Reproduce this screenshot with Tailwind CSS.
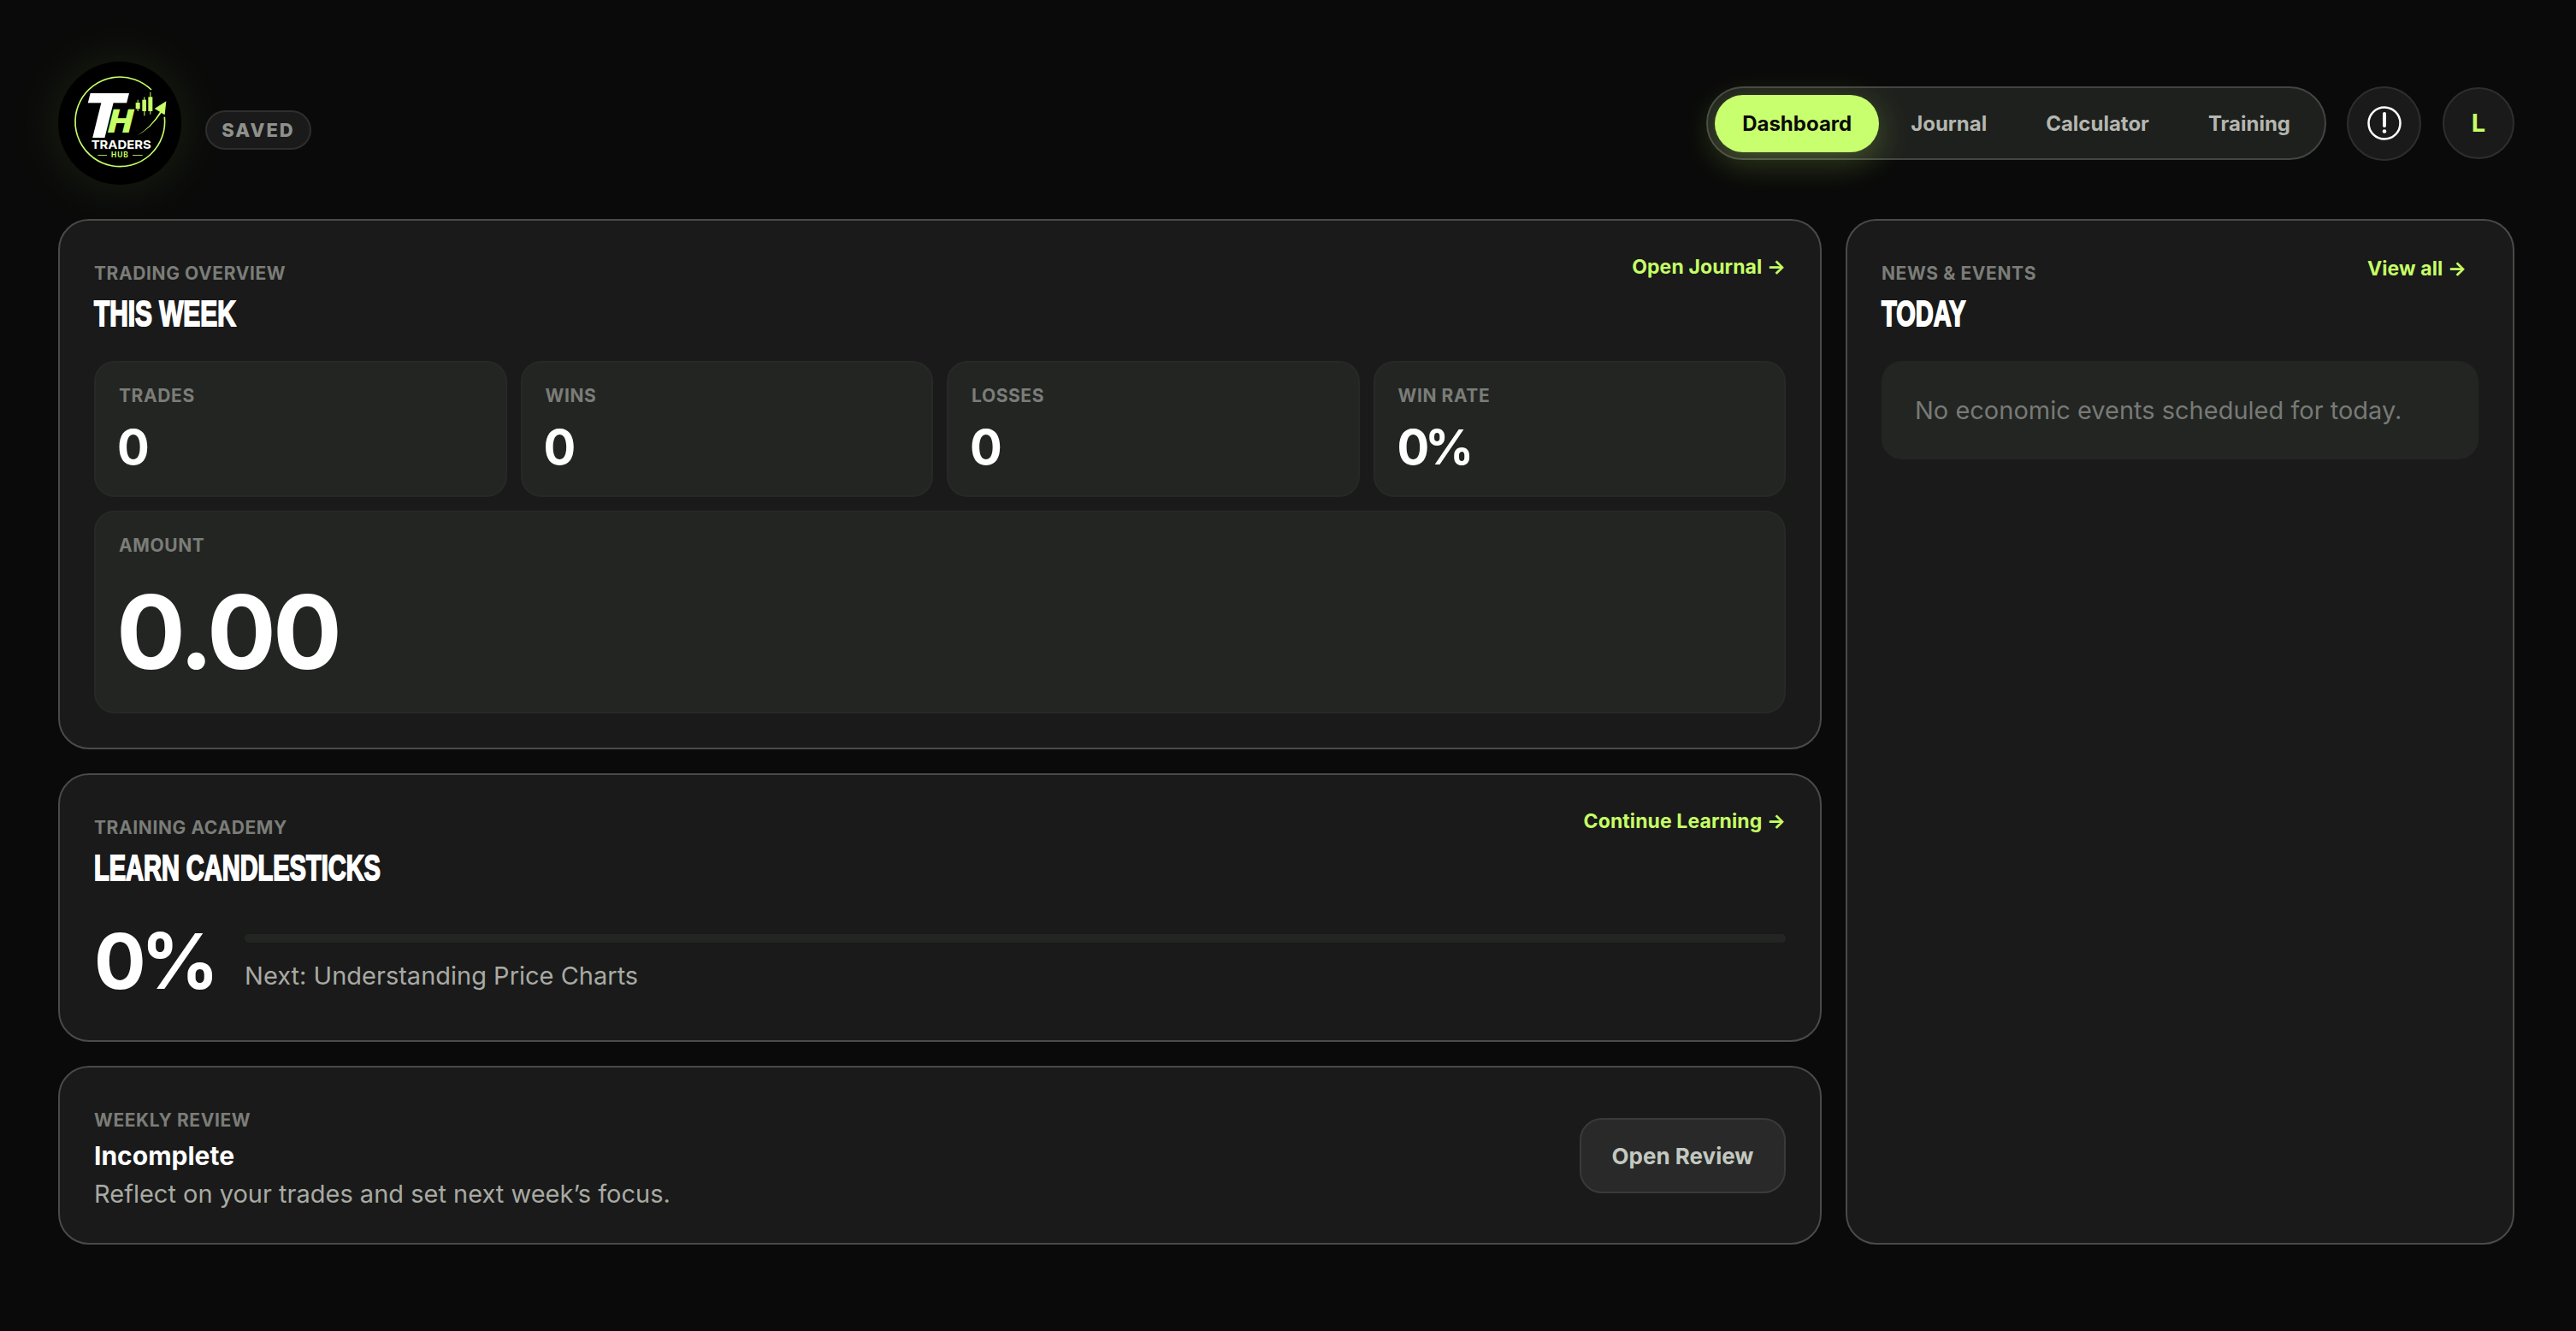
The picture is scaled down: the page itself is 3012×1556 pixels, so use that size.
<!DOCTYPE html>
<html lang="en">
<head>
  <meta charset="UTF-8" />
  <title>Traders Hub</title>
  <script src="https://cdn.jsdelivr.net/npm/@tailwindcss/browser@4"></script>
</head>
<body class="bg-[#0a0a0a] min-h-screen font-['Inter',sans-serif] text-white overflow-hidden">
  <div class="pl-[68px] pr-[72px] pt-[72px]">

    <!-- Header -->
    <header class="flex items-center justify-between h-[144px] mb-[40px]">
      <div class="flex items-center gap-[28px]">
        <div class="w-[144px] h-[144px] rounded-full bg-black shadow-[0_0_70px_rgba(198,255,100,0.1)]">
          <svg viewBox="0 0 432 432" class="w-[144px] h-[144px]">
            <g transform="translate(-24,-21)">
              <path d="M351 120 A157 157 0 1 0 397 215" fill="none" stroke="#c6ff66" stroke-width="5" />
              <text x="92" y="288" transform="translate(72,0) skewX(-14)" font-family="Inter" font-weight="900" font-size="215" fill="#fff">T</text>
              <text x="193" y="270" transform="translate(67,0) skewX(-14)" font-family="Inter" font-weight="900" font-size="112" fill="#c6ff66">H</text>
              <rect x="296" y="165" width="15" height="22" fill="#c6ff66" />
              <rect x="302" y="155" width="3" height="40" fill="#c6ff66" />
              <rect x="319" y="155" width="14" height="40" fill="#c6ff66" />
              <rect x="325" y="145" width="3" height="66" fill="#c6ff66" />
              <rect x="340" y="145" width="15" height="50" fill="#c6ff66" />
              <rect x="346" y="128" width="3" height="78" fill="#c6ff66" />
              <path d="M300 281 Q350 250 381 197 L362 186 L403 160 L398 208 L386 201 Q350 255 300 281 Z" fill="#c6ff66" />
              <text x="245" y="328" text-anchor="middle" textLength="210" lengthAdjust="spacingAndGlyphs" font-family="Inter" font-weight="700" font-size="41" fill="#fff">TRADERS</text>
              <text x="241" y="358" text-anchor="middle" letter-spacing="3" font-family="Inter" font-weight="700" font-size="25" fill="#c6ff66">HUB</text>
              <rect x="163" y="348" width="32" height="2.5" fill="#c6ff66" />
              <rect x="285" y="348" width="35" height="2.5" fill="#c6ff66" />
            </g>
          </svg>
        </div>
        <span class="mt-[16px] w-[124px] h-[46px] flex items-center justify-center rounded-full bg-[#1a1a1a] border-2 border-[#2e2f2d] text-[22px] font-extrabold tracking-[2px] text-[#8f918c]">SAVED</span>
      </div>

      <div class="flex items-center">
        <nav class="flex items-center gap-[5px] h-[86px] px-[8px] rounded-full bg-[#1e201d] border-2 border-[#444543] text-[24px] font-bold text-[#b4b6b0]">
          <a class="h-[67px] flex items-center px-[32px] pt-[1px] rounded-full bg-[#c8ff6e] text-[#0a0a0a] shadow-[0_10px_40px_rgba(198,255,100,0.25)]">Dashboard</a>
          <a class="h-[67px] flex items-center px-[32px] pt-[1px]">Journal</a>
          <a class="h-[67px] flex items-center px-[32px] pt-[1px]">Calculator</a>
          <a class="h-[67px] flex items-center px-[32px] pt-[1px]">Training</a>
        </nav>
        <button class="ml-[24px] w-[87px] h-[87px] flex items-center justify-center rounded-full bg-[#1a1a1a] border-2 border-[#2e2f2d]">
          <svg viewBox="0 0 40 40" class="w-[40px] h-[40px]" fill="none">
            <circle cx="20" cy="20" r="18.5" stroke="#fff" stroke-width="2.5" />
            <path d="M20 9v14" stroke="#fff" stroke-width="4" stroke-linecap="round" />
            <circle cx="20" cy="29.5" r="2.3" fill="#fff" />
          </svg>
        </button>
        <button class="ml-[25px] w-[84px] h-[84px] flex items-center justify-center rounded-full bg-[#1a1a1a] border-2 border-[#2e2f2d] text-[29px] font-bold text-[#c6ff66]">L</button>
      </div>
    </header>

    <!-- Main -->
    <main class="grid grid-cols-[2062px_782px] gap-[28px]">
      <div class="flex flex-col gap-[28px]">

        <section class="rounded-[36px] bg-[#1a1a1a] border-2 border-[#4a4a48] px-[40px] pt-[48px] pb-[40px]">
          <div class="flex items-start justify-between">
            <div>
              <p class="text-[21px] leading-[28px] font-bold tracking-[0.6px] text-[#7b7d78]">TRADING OVERVIEW</p>
              <h2 class="mt-[9px] w-max origin-left scale-x-[0.71] text-[42px] leading-[48px] font-['Liberation_Sans',sans-serif] font-bold [-webkit-text-stroke:2px_white]">THIS WEEK</h2>
            </div>
            <a class="-mt-[8px] text-[23px] leading-[28px] font-bold tracking-[0.1px] text-[#c6ff66]">Open Journal →</a>
          </div>
          <div class="mt-[31px] grid grid-cols-4 gap-[16px]">
            <div class="rounded-[24px] bg-[#232523] border-2 border-[#272927] px-[27px] pt-[25px] pb-[26px]">
              <p class="text-[21px] leading-[28px] font-bold tracking-[0.6px] text-[#7b7d78]">TRADES</p>
              <p class="mt-[16px] -ml-[2px] text-[56px] leading-[60px] font-bold tracking-[-3px]">0</p>
            </div>
            <div class="rounded-[24px] bg-[#232523] border-2 border-[#272927] px-[27px] pt-[25px] pb-[26px]">
              <p class="text-[21px] leading-[28px] font-bold tracking-[0.6px] text-[#7b7d78]">WINS</p>
              <p class="mt-[16px] -ml-[2px] text-[56px] leading-[60px] font-bold tracking-[-3px]">0</p>
            </div>
            <div class="rounded-[24px] bg-[#232523] border-2 border-[#272927] px-[27px] pt-[25px] pb-[26px]">
              <p class="text-[21px] leading-[28px] font-bold tracking-[0.6px] text-[#7b7d78]">LOSSES</p>
              <p class="mt-[16px] -ml-[2px] text-[56px] leading-[60px] font-bold tracking-[-3px]">0</p>
            </div>
            <div class="rounded-[24px] bg-[#232523] border-2 border-[#272927] px-[27px] pt-[25px] pb-[26px]">
              <p class="text-[21px] leading-[28px] font-bold tracking-[0.6px] text-[#7b7d78]">WIN RATE</p>
              <p class="mt-[16px] -ml-[1px] text-[56px] leading-[60px] font-bold tracking-[-5px]">0%</p>
            </div>
          </div>
          <div class="mt-[16px] rounded-[24px] bg-[#232523] border-2 border-[#272927] px-[27px] pt-[25px] pb-[33px]">
            <p class="text-[21px] leading-[28px] font-bold tracking-[0.6px] text-[#7b7d78]">AMOUNT</p>
            <p class="mt-[27px] -ml-[3px] text-[120px] leading-[120px] font-bold tracking-[-4px]">0.00</p>
          </div>
        </section>

        <section class="rounded-[36px] bg-[#1a1a1a] border-2 border-[#4a4a48] px-[40px] pt-[48px] pb-[45px]">
          <div class="flex items-start justify-between">
            <div>
              <p class="text-[21px] leading-[28px] font-bold tracking-[0.6px] text-[#7b7d78]">TRAINING ACADEMY</p>
              <h2 class="mt-[9px] w-max origin-left scale-x-[0.69] text-[42px] leading-[48px] font-['Liberation_Sans',sans-serif] font-bold [-webkit-text-stroke:2px_white]">LEARN CANDLESTICKS</h2>
            </div>
            <a class="-mt-[8px] text-[23px] leading-[28px] font-bold tracking-[0.1px] text-[#c6ff66]">Continue Learning →</a>
          </div>
          <div class="mt-[42px] flex items-center gap-[36px]">
            <p class="mb-[4px] text-[90px] leading-[86px] font-bold tracking-[-6px]">0%</p>
            <div class="flex-1">
              <div class="h-[10px] rounded-full bg-[#232523]"></div>
              <p class="mt-[19px] text-[29px] leading-[40px] text-[#a8aaa3]">Next: Understanding Price Charts</p>
            </div>
          </div>
        </section>

        <section class="flex items-center justify-between rounded-[36px] bg-[#1a1a1a] border-2 border-[#4a4a48] px-[40px] pt-[48px] pb-[37px]">
          <div>
            <p class="text-[21px] leading-[28px] font-bold tracking-[0.6px] text-[#7b7d78]">WEEKLY REVIEW</p>
            <p class="mt-[8px] text-[30px] leading-[38px] font-bold">Incomplete</p>
            <p class="mt-[6px] text-[29px] leading-[40px] text-[#a8aaa3]">Reflect on your trades and set next week’s focus.</p>
          </div>
          <button class="w-[241px] h-[88px] rounded-[26px] bg-[#282928] border-2 border-[#3a3b39] text-[26px] font-bold text-[#c3c8c0] -mt-[10px]">Open Review</button>
        </section>
      </div>

      <aside class="rounded-[36px] bg-[#1a1a1a] border-2 border-[#4a4a48] px-[40px] pt-[48px]">
        <div class="flex items-start justify-between">
          <div>
            <p class="text-[21px] leading-[28px] font-bold tracking-[0.6px] text-[#7b7d78]">NEWS &amp; EVENTS</p>
            <h2 class="mt-[9px] w-max origin-left scale-x-[0.69] text-[42px] leading-[48px] font-['Liberation_Sans',sans-serif] font-bold [-webkit-text-stroke:2px_white]">TODAY</h2>
          </div>
          <a class="-mt-[6px] mr-[14px] text-[23px] leading-[28px] font-bold tracking-[0.1px] text-[#c6ff66]">View all →</a>
        </div>
        <div class="mt-[31px] h-[115px] flex items-center rounded-[24px] bg-[#232523] px-[39px] text-[29px] text-[#777a75]">No economic events scheduled for today.</div>
      </aside>
    </main>
  </div>
</body>
</html>
